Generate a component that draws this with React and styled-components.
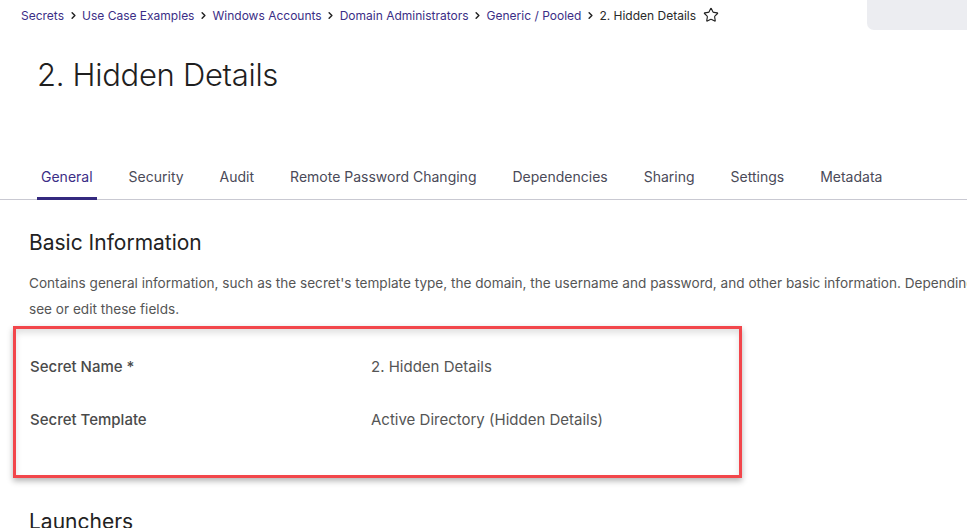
import React from 'react';
import styled, { createGlobalStyle } from 'styled-components';
import { ChevronRight, Star } from 'lucide-react';

const crumbs = [
  'Secrets',
  'Use Case Examples',
  'Windows Accounts',
  'Domain Administrators',
  'Generic / Pooled',
];

const tabs = [
  'General',
  'Security',
  'Audit',
  'Remote Password Changing',
  'Dependencies',
  'Sharing',
  'Settings',
  'Metadata',
];

const fields = [
  { label: 'Secret Name *', value: '2. Hidden Details' },
  { label: 'Secret Template', value: 'Active Directory (Hidden Details)' },
];

const App = () => {
  return (
    <>
      <GlobalStyle />
      <Page>
        <TopBar>
          <Breadcrumb>
            {crumbs.map((c) => (
              <React.Fragment key={c}>
                <CrumbLink>{c}</CrumbLink>
                <ChevronRight size={11} strokeWidth={3.2} color='#222' />
              </React.Fragment>
            ))}
            <CrumbCurrent>2. Hidden Details</CrumbCurrent>
            <Star size={16} strokeWidth={1.7} color='#222' />
          </Breadcrumb>
          <SearchStub />
        </TopBar>

        <Title>2. Hidden Details</Title>

        <TabBar>
          {tabs.map((t, i) => (
            <Tab key={t} $active={i === 0}>
              {t}
            </Tab>
          ))}
        </TabBar>

        <Content>
          <SectionTitle>Basic Information</SectionTitle>
          <Description>
            Contains general information, such as the secret's template type,
            the domain, the username and password, and other basic information.
            Depending on your permissions, you may or may not be able to
            <br />
            see or edit these fields.
          </Description>

          <FieldsCard>
            {fields.map((f) => (
              <FieldRow key={f.label}>
                <FieldLabel>{f.label}</FieldLabel>
                <FieldValue>{f.value}</FieldValue>
              </FieldRow>
            ))}
          </FieldsCard>

          <SectionTitle $spaced>Launchers</SectionTitle>
        </Content>
      </Page>
    </>
  );
};

export default App;

// Styled Components Area
const GlobalStyle = createGlobalStyle`
  html, body {
    margin: 0;
    padding: 0;
    background: #fff;
    overflow: hidden;
  }
  body {
    font-family: Inter, "Open Sans", "Liberation Sans", sans-serif;
    color: #222;
  }
`;

const Page = styled.div`
  width: 967px;
  height: 528px;
  overflow: hidden;
`;

const TopBar = styled.div`
  display: flex;
  justify-content: space-between;
  align-items: flex-start;
  height: 30px;
`;

const Breadcrumb = styled.nav`
  display: flex;
  align-items: center;
  gap: 3.5px;
  padding: 7px 0 0 21px;
  font-size: 12px;
  white-space: nowrap;
`;

const CrumbLink = styled.a`
  color: #3b2e86;
  cursor: pointer;
`;

const CrumbCurrent = styled.span`
  color: #2a2a2a;
  margin-right: 3px;
`;

const SearchStub = styled.div`
  width: 100px;
  height: 30px;
  background: #ecedf1;
  border-bottom-left-radius: 7px;
`;

const Title = styled.h1`
  margin: 26px 0 0 37px;
  font-size: 31px;
  font-weight: 300;
  line-height: 38px;
  color: #1f1f1f;
  letter-spacing: -0.3px;
`;

const TabBar = styled.div`
  display: flex;
  gap: 28px;
  margin-top: 63px;
  padding-left: 37px;
  border-bottom: 1px solid #c9c9d2;
`;

const Tab = styled.div`
  padding: 11px 4px 12px;
  font-size: 14px;
  color: ${(p) => (p.$active ? '#3b2e86' : '#4a4a58')};
  border-bottom: 3px solid ${(p) => (p.$active ? '#34297f' : 'transparent')};
  margin-bottom: -1px;
  white-space: nowrap;
`;

const Content = styled.div`
  padding-left: 13px;
`;

const SectionTitle = styled.h2`
  margin: ${(p) => (p.$spaced ? '30px' : '29px')} 0 0 16px;
  font-size: 21px;
  font-weight: 400;
  line-height: 28px;
  color: #222;
`;

const Description = styled.p`
  margin: 13px 0 0 16px;
  font-size: 13.6px;
  line-height: 26px;
  color: #555;
  white-space: nowrap;
`;

const FieldsCard = styled.div`
  box-sizing: border-box;
  width: 729px;
  height: 152px;
  margin-top: 4px;
  padding: 11px 0 0 14px;
  border: 3px solid #f2464b;
  box-shadow: 0 3px 6px rgba(0, 0, 0, 0.3), inset 0 4px 6px rgba(0, 0, 0, 0.12);
`;

const FieldRow = styled.div`
  display: grid;
  grid-template-columns: 341px 1fr;
  align-items: center;
  height: 53px;
  font-size: 15px;
`;

const FieldLabel = styled.div`
  font-weight: 500;
  color: #4a4a4a;
`;

const FieldValue = styled.div`
  color: #555;
`;
